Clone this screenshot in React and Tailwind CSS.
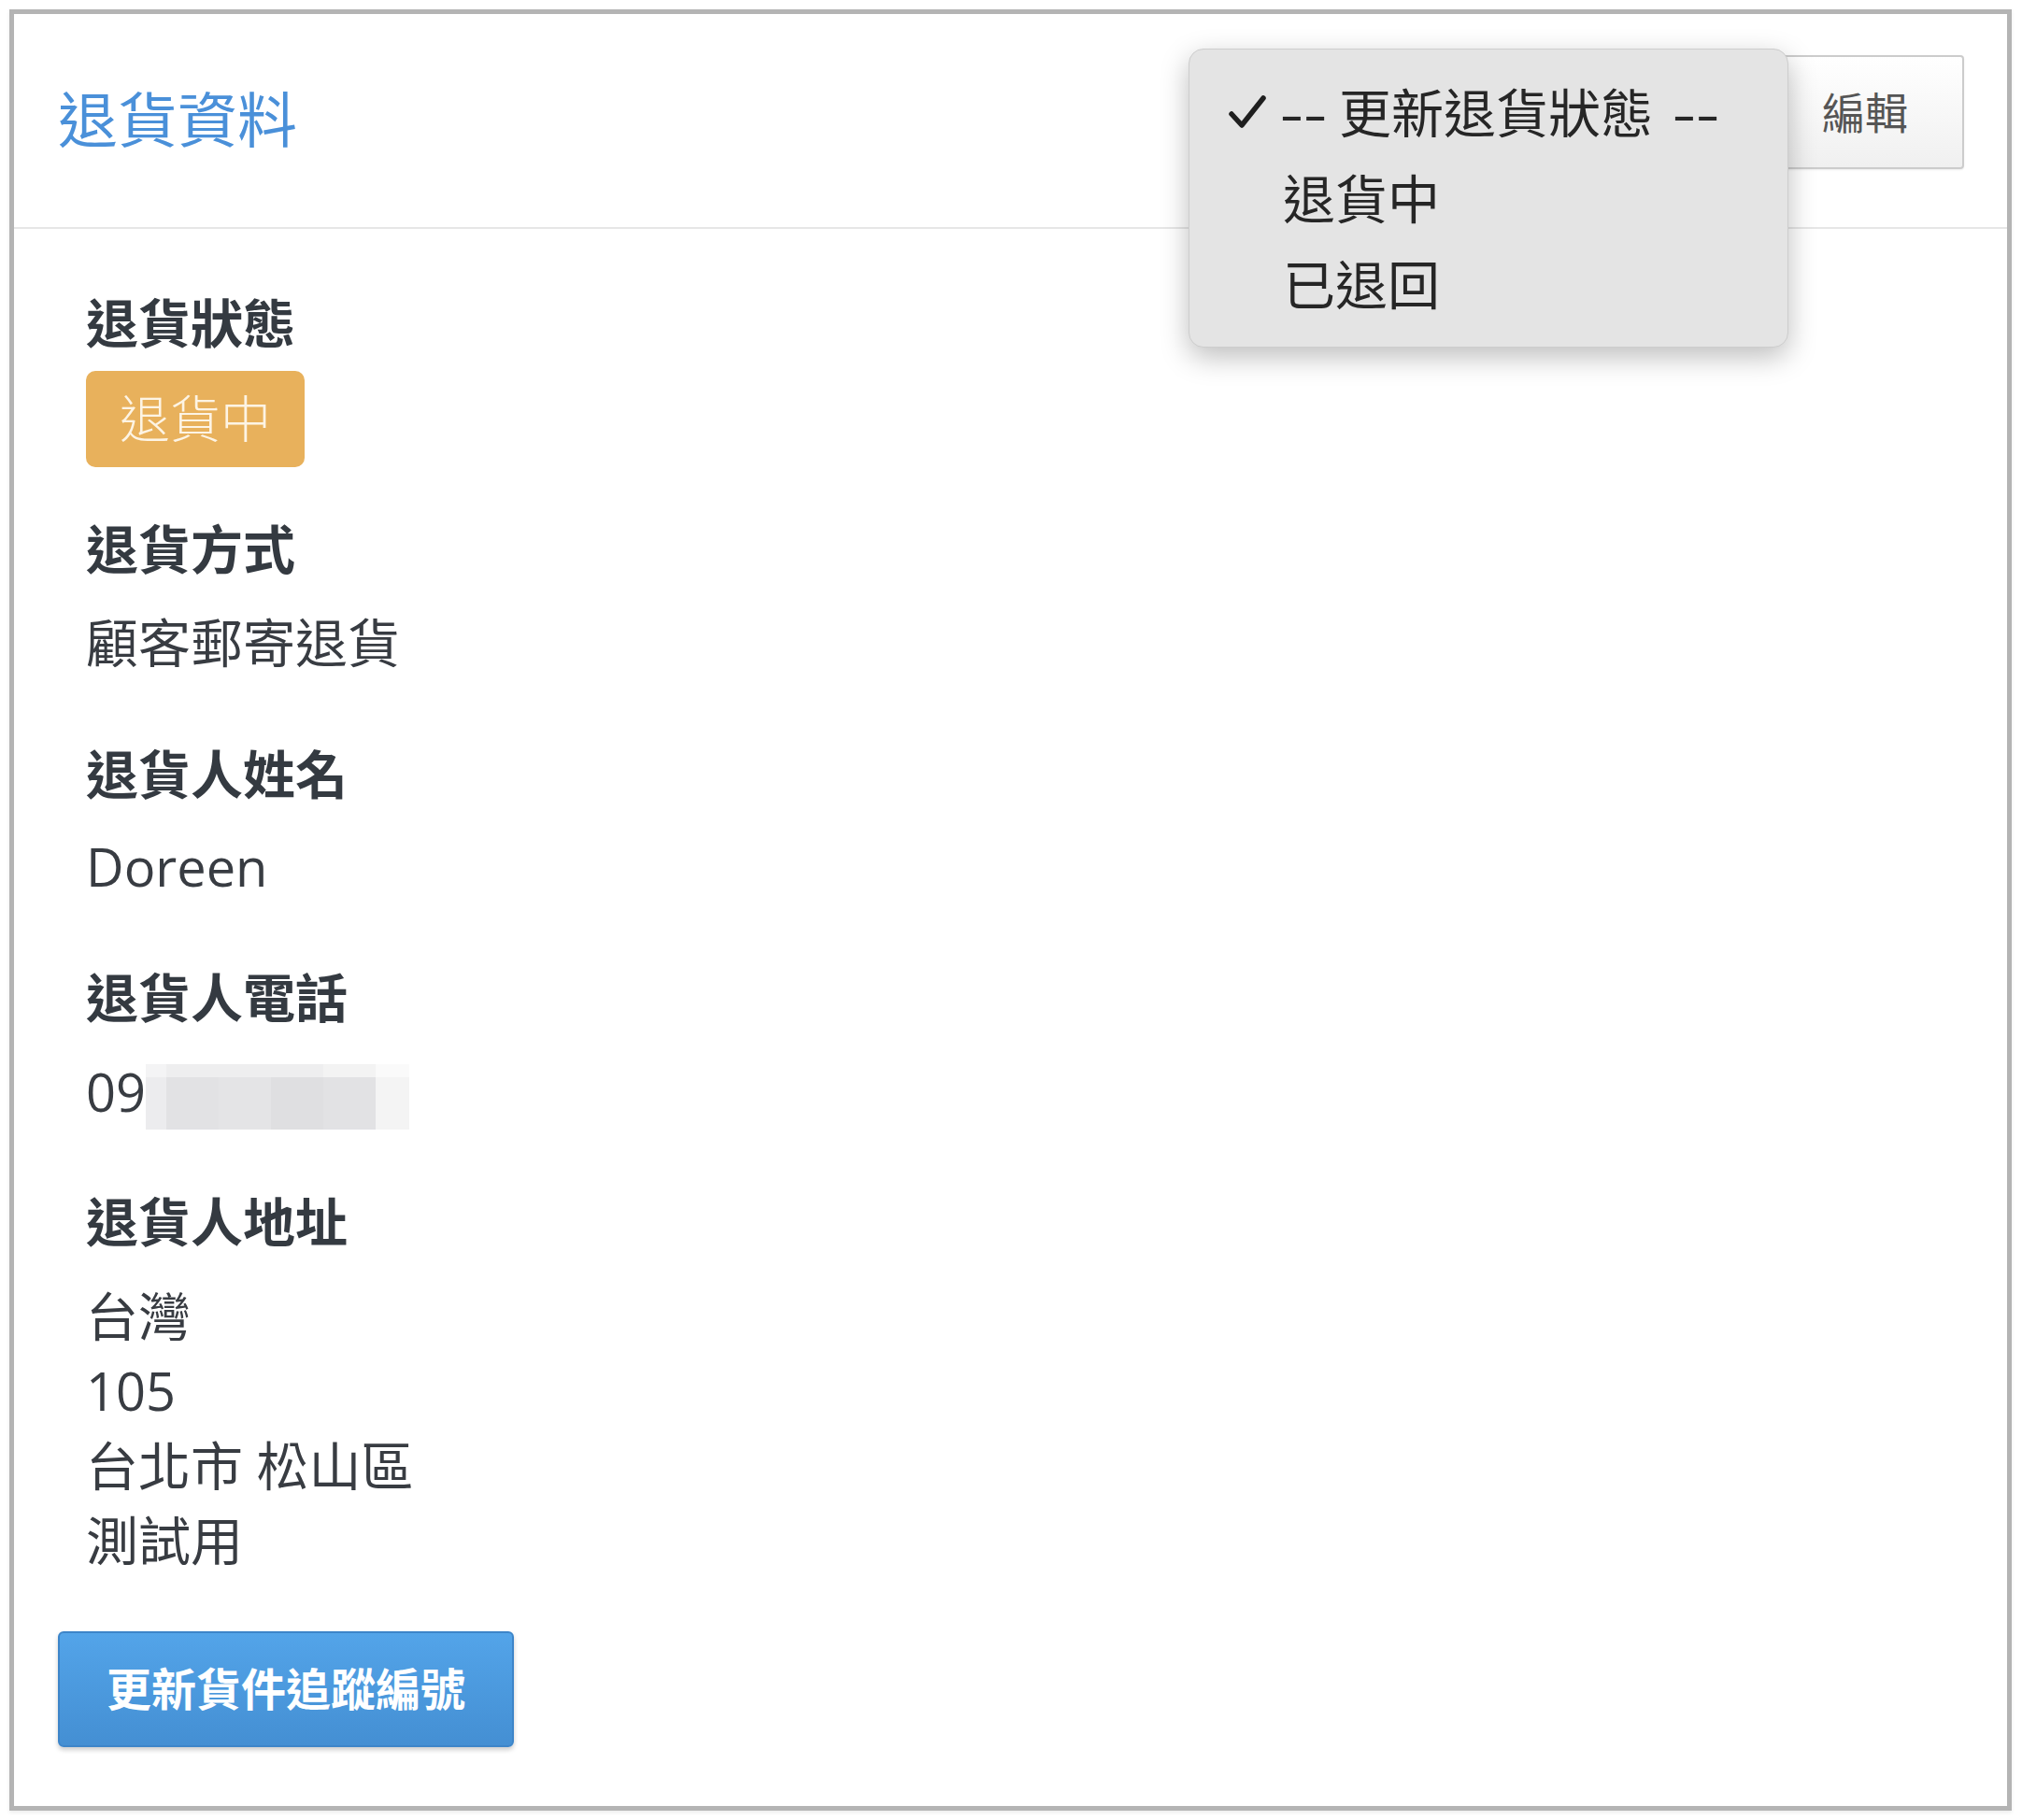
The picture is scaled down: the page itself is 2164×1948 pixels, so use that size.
const FONT = { fontFamily: '"Open Sans", "Noto Sans CJK TC", sans-serif' };

function Field({ label, children, valueClass = "mt-[20px]" }) {
  return (
    <div className="flex flex-col">
      <div className="h-[80px] text-[56px] font-bold leading-[80px] text-[#343a41]">{label}</div>
      <div className={valueClass}>{children}</div>
    </div>
  );
}

function Masked() {
  const top = ["#f4f4f5", "#eeeeef", "#eeeeef", "#eeeeef", "#f3f3f3", "#fafafa"];
  const bottom = ["#ececee", "#e2e2e4", "#e4e4e6", "#dfdfe1", "#e2e2e4", "#f4f4f4"];
  const widths = [22, 56, 56, 56, 56, 36];
  return (
    <div className="flex h-[70px] flex-col">
      <div className="flex h-[14px]">
        {widths.map((w, i) => (
          <div key={i} className="h-full" style={{ width: w, background: top[i] }} />
        ))}
      </div>
      <div className="flex h-[56px]">
        {widths.map((w, i) => (
          <div key={i} className="h-full" style={{ width: w, background: bottom[i] }} />
        ))}
      </div>
    </div>
  );
}

function StatusMenu() {
  return (
    <div className="absolute left-[1257px] top-[37px] w-[642px] rounded-[16px] border border-[#cdcdcd] bg-[#e4e4e4] pb-[21px] pt-[21px] text-[56px] text-[#262626] shadow-[0_10px_30px_rgba(0,0,0,0.26)]">
      <div className="flex h-[92px] items-center">
        <span className="flex w-[100px] justify-end pr-[18px]">
          <svg width="40" height="36" viewBox="0 0 40 36" fill="none">
            <path d="M3 20 L14 32 L37 3" stroke="#1f1f1f" strokeWidth="5.5" strokeLinecap="round" strokeLinejoin="round" />
          </svg>
        </span>
        <span className="whitespace-nowrap">
          <span className="ml-[4px] mr-[20px] inline-block scale-x-[1.4]">--</span>
          更新退貨狀態
          <span className="ml-[28px] inline-block scale-x-[1.4]">--</span>
        </span>
      </div>
      <div className="flex h-[92px] items-center pl-[100px]">退貨中</div>
      <div className="flex h-[92px] items-center pl-[100px]">已退回</div>
    </div>
  );
}

export default function App() {
  return (
    <div className="min-h-screen bg-white pl-[10px] pt-[10px]" style={FONT}>
      <div className="flex h-[1928px] w-[2143px] flex-col border-[5px] border-[#b4b4b4] bg-white shadow-[0_2px_4px_rgba(0,0,0,0.08)]">
        <header className="relative flex h-[230px] items-start justify-between border-b-2 border-[#e6e6e6] pl-[47px] pr-[46px]">
          <h1 className="mt-[78px] text-[64px] leading-[70px] text-[#4a90d9]">退貨資料</h1>
          <button className="mt-[44px] h-[122px] w-[212px] rounded-[4px] border-2 border-[#cccccc] bg-gradient-to-b from-white to-[#f0f0f0] text-[46px] text-[#555555] shadow-[0_1px_2px_rgba(0,0,0,0.08)]">
            編輯
          </button>
          <StatusMenu />
        </header>

        <div className="px-[47px] pt-[60px]">
          <div className="ml-[30px] flex flex-col">
            <Field label="退貨狀態" valueClass="mt-[12px] mb-[47px]">
              <span className="inline-flex h-[103px] items-center rounded-[10px] bg-[#e8b15c] px-[36px] text-[54px] font-light text-[#fdf4e4]">
                退貨中
              </span>
            </Field>
            <Field label="退貨方式" valueClass="mt-[20px] mb-[61px]">
              <div className="text-[56px] leading-[80px] text-[#383c42]">顧客郵寄退貨</div>
            </Field>
            <Field label="退貨人姓名" valueClass="mt-[19px] mb-[60px]">
              <div className="text-[56px] leading-[80px] text-[#383c42]">Doreen</div>
            </Field>
            <Field label="退貨人電話" valueClass="mt-[21px] mb-[59px]">
              <div className="flex h-[80px] items-center text-[56px] leading-[80px] text-[#383c42]">
                <span>09</span>
                <div className="mt-[12px]">
                  <Masked />
                </div>
              </div>
            </Field>
            <Field label="退貨人地址" valueClass="mt-[21px]">
              <div className="text-[56px] leading-[80px] text-[#383c42]">
                <div>台灣</div>
                <div>105</div>
                <div>台北市 松山區</div>
                <div>測試用</div>
              </div>
            </Field>
          </div>

          <button className="mt-[58px] h-[124px] w-[488px] rounded-[6px] border-2 border-[#3d85c9] bg-gradient-to-b from-[#53a4e9] to-[#448fd3] text-[48px] font-bold text-white shadow-[0_3px_5px_rgba(0,0,0,0.2)]">
            更新貨件追蹤編號
          </button>
        </div>
      </div>
    </div>
  );
}
